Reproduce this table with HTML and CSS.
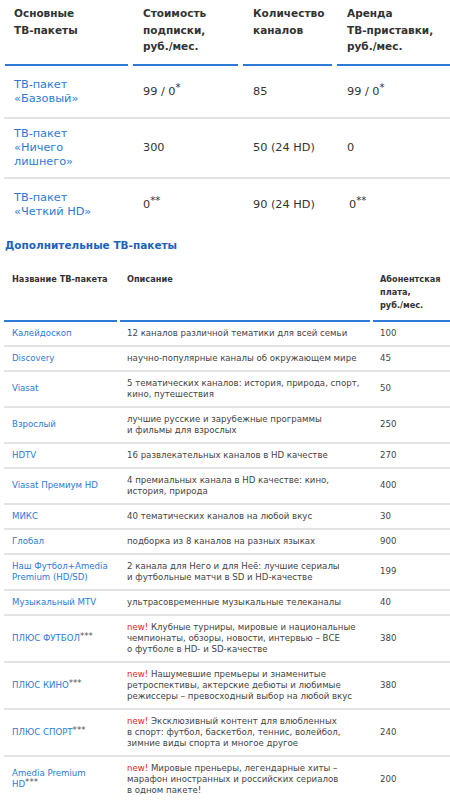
FILE: index.html
```html
<!DOCTYPE html>
<html lang="ru">
<head>
<meta charset="utf-8">
<title>ТВ-пакеты</title>
<link rel="stylesheet" href="styles.css">
</head>
<body>
<div class="page">
  <table class="main">
    <colgroup>
      <col class="m1"><col class="m2"><col class="m3"><col class="m4">
    </colgroup>
    <thead>
      <tr>
        <th class="first">Основные<br>ТВ-пакеты</th>
        <th>Стоимость<br>подписки,<br>руб./мес.</th>
        <th>Количество<br>каналов</th>
        <th>Аренда<br>ТВ-приставки,<br>руб./мес.</th>
      </tr>
    </thead>
    <tbody>
      <tr>
        <td class="first"><a href="#">ТВ-пакет<br>«Базовый»</a></td>
        <td>99 / 0<sup>*</sup></td>
        <td>85</td>
        <td>99 / 0<sup>*</sup></td>
      </tr>
      <tr>
        <td class="first"><a href="#">ТВ-пакет<br>«Ничего<br>лишнего»</a></td>
        <td>300</td>
        <td>50 (24 HD)</td>
        <td>0</td>
      </tr>
      <tr class="last">
        <td class="first"><a href="#">ТВ-пакет<br>«Четкий HD»</a></td>
        <td>0<sup>**</sup></td>
        <td>90 (24 HD)</td>
        <td class="shift">0<sup>**</sup></td>
      </tr>
    </tbody>
  </table>

  <h2 class="subhead">Дополнительные ТВ-пакеты</h2>

  <table class="extra">
    <colgroup>
      <col class="e1"><col class="e2"><col class="e3">
    </colgroup>
    <thead>
      <tr>
        <th class="first">Название ТВ-пакета</th>
        <th>Описание</th>
        <th>Абонентская<br>плата,<br>руб./мес.</th>
      </tr>
    </thead>
    <tbody>
      <tr><td class="first"><a href="#">Калейдоскоп</a></td><td class="desc">12 каналов различной тематики для всей семьи</td><td>100</td></tr>
      <tr><td class="first"><a href="#">Discovery</a></td><td class="desc">научно-популярные каналы об окружающем мире</td><td>45</td></tr>
      <tr><td class="first"><a href="#">Viasat</a></td><td class="desc">5 тематических каналов: история, природа, спорт,<br>кино, путешествия</td><td>50</td></tr>
      <tr><td class="first"><a href="#">Взрослый</a></td><td class="desc">лучшие русские и зарубежные программы<br>и фильмы для взрослых</td><td>250</td></tr>
      <tr><td class="first"><a href="#">HDTV</a></td><td class="desc">16 развлекательных каналов в HD качестве</td><td>270</td></tr>
      <tr><td class="first"><a href="#">Viasat Премиум HD</a></td><td class="desc">4 премиальных канала в HD качестве: кино,<br>история, природа</td><td>400</td></tr>
      <tr><td class="first"><a href="#">МИКС</a></td><td class="desc">40 тематических каналов на любой вкус</td><td>30</td></tr>
      <tr><td class="first"><a href="#">Глобал</a></td><td class="desc">подборка из 8 каналов на разных языках</td><td>900</td></tr>
      <tr><td class="first"><a href="#">Наш Футбол+Amedia<br>Premium (HD/SD)</a></td><td class="desc">2 канала для Него и для Неё: лучшие сериалы<br>и футбольные матчи в SD и HD-качестве</td><td>199</td></tr>
      <tr><td class="first"><a href="#">Музыкальный MTV</a></td><td class="desc">ультрасовременные музыкальные телеканалы</td><td>40</td></tr>
      <tr><td class="first"><a href="#">ПЛЮС ФУТБОЛ</a><sup>***</sup></td><td class="desc"><span class="new">new!</span> Клубные турниры, мировые и национальные<br>чемпионаты, обзоры, новости, интервью – ВСЕ<br>о футболе в HD- и SD-качестве</td><td>380</td></tr>
      <tr><td class="first"><a href="#">ПЛЮС КИНО</a><sup>***</sup></td><td class="desc"><span class="new">new!</span> Нашумевшие премьеры и знаменитые<br>ретроспективы, актерские дебюты и любимые<br>режиссеры – превосходный выбор на любой вкус</td><td>380</td></tr>
      <tr><td class="first"><a href="#">ПЛЮС СПОРТ</a><sup>***</sup></td><td class="desc"><span class="new">new!</span> Эксклюзивный контент для влюбленных<br>в спорт: футбол, баскетбол, теннис, волейбол,<br>зимние виды спорта и многое другое</td><td>240</td></tr>
      <tr><td class="first"><a href="#">Amedia Premium<br>HD</a><sup>***</sup></td><td class="desc"><span class="new">new!</span> Мировые преньеры, легендарные хиты –<br>марафон иностранных и российских сериалов<br>в одном пакете!</td><td>200</td></tr>
    </tbody>
  </table>
</div>
</body>
</html>
```

FILE: styles.css
```css
html, body {
  margin: 0;
  padding: 0;
  background: #ffffff;
}

body {
  font-family: "DejaVu Sans", Verdana, sans-serif;
  color: #333333;
}

.page {
  padding: 0 0 0 4px;
  width: 446px;
}

a {
  color: #2a7bd8;
  text-decoration: none;
}

sup {
  font-size: 90%;
  line-height: 0;
  vertical-align: 0.4em;
}

/* ---------- main table ---------- */
.main {
  width: 446px;
  table-layout: fixed;
  border-collapse: separate;
  border-spacing: 0;
  font-size: 11.3px;
}

.m1 { width: 124px; }
.m2 { width: 110px; }
.m3 { width: 94px; }
.m4 { width: 118px; }

.main th {
  text-align: left;
  vertical-align: top;
  font-weight: bold;
  font-size: 10.5px;
  line-height: 16.5px;
  color: #333333;
  padding: 5px 0 11.5px 15px;
  background: linear-gradient(#2a7ad6, #2a7ad6) no-repeat right bottom;
  background-size: calc(100% - 5px) 2px;
}

.main th.first {
  padding-left: 10px;
  background-size: calc(100% - 1px) 2px;
}

.main td {
  text-align: left;
  vertical-align: middle;
  line-height: 14px;
  height: 35px;
  padding: 8px 0 8px 15px;
  border-bottom: 2px solid #e3e3e3;
}

.main td.first {
  padding-left: 10px;
}

.main td.shift {
  padding-left: 17px;
}

.main tr.last td {
  border-bottom: none;
}

/* ---------- subheading ---------- */
.subhead {
  margin: 8px 0 0 1px;
  font-size: 10.5px;
  line-height: 14px;
  font-weight: bold;
  color: #1c63bd;
}

/* ---------- extra table ---------- */
.extra {
  width: 446px;
  margin-top: 12px;
  table-layout: fixed;
  border-collapse: separate;
  border-spacing: 0;
  font-size: 8.6px;
}

.e1 { width: 113px; }
.e2 { width: 253px; }
.e3 { width: 80px; }

.extra th {
  text-align: left;
  vertical-align: top;
  font-weight: bold;
  font-size: 8.2px;
  line-height: 13px;
  color: #333333;
  padding: 9px 0 9.5px 10px;
  background: linear-gradient(#2a7ad6, #2a7ad6) no-repeat right bottom;
  background-size: calc(100% - 3px) 2px;
}

.extra th.first {
  padding-left: 8px;
  background-size: 100% 2px;
}

.extra td {
  text-align: left;
  vertical-align: middle;
  line-height: 11px;
  padding: 6px 0 6px 10px;
  border-bottom: 2px solid #e3e3e3;
  color: #444444;
}

.extra td.desc {
  white-space: nowrap;
}

.extra td.first {
  padding-left: 8px;
}

.extra td sup {
  color: #555555;
  font-size: 100%;
  vertical-align: 0.25em;
}

.new {
  color: #ee1c1c;
}
```
